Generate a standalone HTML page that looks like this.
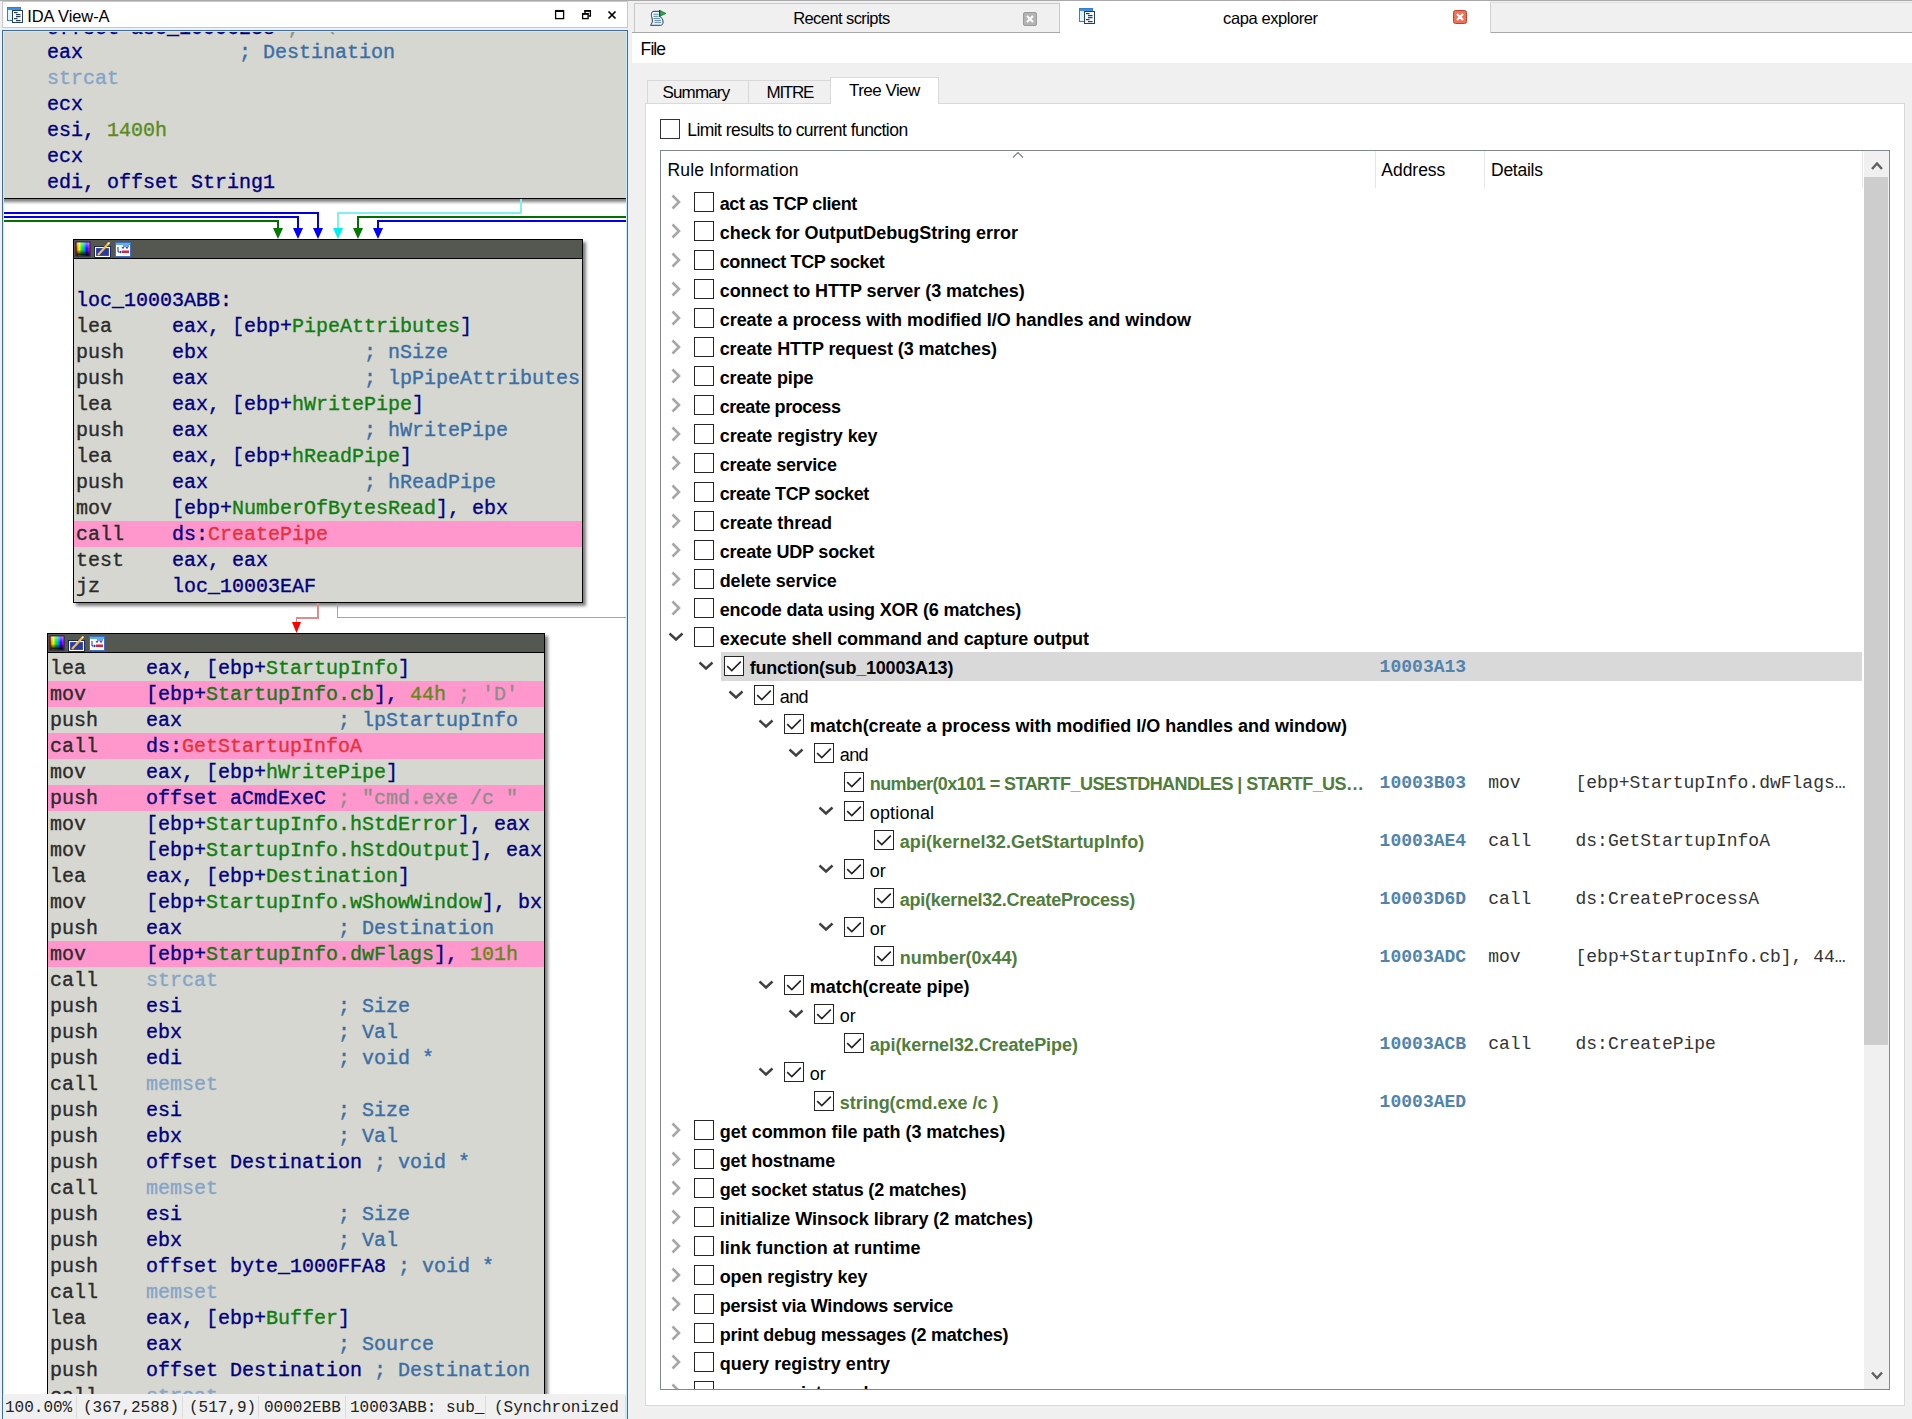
<!DOCTYPE html><html><head><meta charset="utf-8"><style>*{margin:0;padding:0;box-sizing:border-box}
html,body{width:1912px;height:1419px;overflow:hidden;background:#f0f0f0;position:relative;font-family:"Liberation Sans",sans-serif}
.abs{position:absolute}
.ttl{font-size:17px;color:#000;letter-spacing:-0.4px;white-space:pre;line-height:20px}
.blk{position:absolute;background:#d5d7d0;border:1px solid #000;box-shadow:3px 3px 3px rgba(0,0,0,0.5)}
.hdr{position:absolute;left:0;top:0;right:0;height:19px;background:#555751;border-bottom:1px solid #000}
.ln{position:absolute;height:26px;font-family:"Liberation Mono",monospace;font-size:20px;line-height:26px;white-space:pre;color:#2b2b2b;padding-top:1px;-webkit-text-stroke:0.35px currentColor}
.pk{background:#ff97cc}
.r{color:#000080}
.g{color:#0f7d0f}
.cm{color:#3a6ea5}
.lb{color:#85a4c8}
.rd{color:#e8303a}
.nm{color:#5f8a1a}
.gr{color:#8d8d8d}
.stt{font-family:"Liberation Mono",monospace;font-size:16px;line-height:22px;white-space:pre;color:#222}
.cb{position:absolute;width:20px;height:20px;border:1px solid #333;background:#fff}
.row{position:absolute;font-size:18px;line-height:29px;white-space:pre;color:#000}
.b{font-weight:bold}
.gt{color:#4f7f3f}
.addr{position:absolute;font-family:"Liberation Mono",monospace;font-weight:bold;font-size:18px;color:#4a78a0;white-space:pre;line-height:29px}
.det{position:absolute;font-family:"Liberation Mono",monospace;font-size:18px;color:#1a1a1a;white-space:pre;line-height:29px}
.ui{position:absolute;font-size:17px;color:#000;white-space:pre;line-height:20px}
</style></head><body><div class="abs" style="left:0;top:0;width:1912px;height:1px;background:#a9a9a9"></div>
<div class="abs" style="left:2px;top:1px;width:626px;height:27px;background:#fff;border:1px solid #c8c8c8"></div>
<svg class="abs" style="left:7px;top:7px" width="17" height="17" viewBox="0 0 17 17">
 <rect x="0.5" y="0.5" width="13" height="13" fill="#dff6ff" stroke="#3b7cc4"/>
 <rect x="1" y="1" width="12" height="2" fill="#3d8fe0"/>
 <rect x="5.5" y="3.5" width="10" height="12" fill="#f8fcff" stroke="#253f63"/>
 <rect x="7" y="5" width="3.5" height="1.2" fill="#2d3d55"/><rect x="9" y="7" width="4.5" height="1.2" fill="#2d3d55"/><rect x="9" y="9" width="4.5" height="1.2" fill="#2d3d55"/><rect x="7" y="11" width="3.5" height="1.2" fill="#2d3d55"/><rect x="9" y="13" width="4.5" height="1.2" fill="#2d3d55"/>
</svg>

<svg class="abs" style="left:550px;top:6px" width="72" height="16" viewBox="0 0 72 16">
 <rect x="5.6" y="4.6" width="8" height="8" fill="none" stroke="#000" stroke-width="1.3"/>
 <rect x="5" y="4" width="9" height="2" fill="#000"/>
 <rect x="32.6" y="7.6" width="5.5" height="5" fill="none" stroke="#000" stroke-width="1.3"/>
 <rect x="32" y="7" width="6.5" height="1.8" fill="#000"/>
 <path d="M35 7V4.6h5.4V10H38.5" fill="none" stroke="#000" stroke-width="1.3"/>
 <rect x="34.4" y="4" width="6.6" height="1.8" fill="#000"/>
 <path d="M58.5 5.5l7 7M65.5 5.5l-7 7" stroke="#000" stroke-width="1.7"/>
</svg>
<div class="abs" style="left:2px;top:30px;width:626px;height:1400px;background:#fff;border:1px solid #3d6d9c;overflow:hidden"><div class="abs" style="left:-3px;top:-31px;width:1912px;height:1419px"><div class="blk" style="left:-20px;top:-20px;width:700px;height:219px"><div class="ln" style="top:34px;left:66px;width:700px;"><span class="r">offset asc_1000C238 </span><span class="gr">; '\'</span></div><div class="ln" style="top:58px;left:66px;width:700px;"><span class="r">eax             </span><span class="cm">; Destination</span></div><div class="ln" style="top:84px;left:66px;width:700px;"><span class="lb">strcat</span></div><div class="ln" style="top:110px;left:66px;width:700px;"><span class="r">ecx</span></div><div class="ln" style="top:136px;left:66px;width:700px;"><span class="r">esi, </span><span class="nm">1400h</span></div><div class="ln" style="top:162px;left:66px;width:700px;"><span class="r">ecx</span></div><div class="ln" style="top:188px;left:66px;width:700px;"><span class="r">edi, offset String1</span></div></div><div class="blk" style="left:73px;top:239px;width:510px;height:364px"><div class="hdr"></div><svg class="abs" style="left:1px;top:1px" width="58" height="17" viewBox="0 0 58 17">
 <defs><linearGradient id="hue" x1="0" x2="1" y1="0" y2="0">
  <stop offset="0" stop-color="#ff4000"/><stop offset="0.2" stop-color="#ffff00"/><stop offset="0.4" stop-color="#00ff00"/><stop offset="0.6" stop-color="#00a0ff"/><stop offset="0.8" stop-color="#2000ff"/><stop offset="1" stop-color="#ff00ff"/></linearGradient>
  <linearGradient id="dk" x1="0" x2="0" y1="0" y2="1"><stop offset="0" stop-color="#fff" stop-opacity="0.5"/><stop offset="0.45" stop-color="#fff" stop-opacity="0"/><stop offset="0.55" stop-color="#000" stop-opacity="0"/><stop offset="1" stop-color="#000" stop-opacity="1"/></linearGradient></defs>
 <rect x="0.5" y="0.5" width="15" height="15" fill="#1a1a3a"/>
 <rect x="1.5" y="1.5" width="13" height="13" fill="url(#hue)"/>
 <rect x="1.5" y="1.5" width="13" height="13" fill="url(#dk)"/>
 <rect x="20.5" y="6.5" width="14" height="9" fill="#2a3aa0" stroke="#fff" stroke-width="1.2"/>
 <rect x="19.5" y="5.5" width="16" height="11" fill="none" stroke="#0a1a60" stroke-width="0.8"/>
 <path d="M23 14L34 2" stroke="#f0c040" stroke-width="2.2"/><path d="M33 3l1.5-1.5" stroke="#fff" stroke-width="1.5"/>
 <rect x="40" y="1" width="16" height="15" fill="#3c70c0"/>
 <rect x="41" y="4" width="14" height="11" fill="#fff"/>
 <rect x="41" y="2" width="14" height="2" fill="#5ab0f0"/>
 <path d="M43 6v5h3M45 10l1.5 1-1.5 1M47 6l1 1.5 1-1.5M51 6l1 1.5 1-1.5M48 5h6" stroke="#1030c0" stroke-width="1" fill="none"/>
 <rect x="47" y="9.5" width="7" height="2.5" fill="#e02040"/>
</svg><div class="ln" style="top:21px;left:0px;width:508px;padding-left:2px;"></div><div class="ln" style="top:47px;left:0px;width:508px;padding-left:2px;"><span class="r">loc_10003ABB:</span></div><div class="ln" style="top:73px;left:0px;width:508px;padding-left:2px;">lea     <span class="r">eax, [ebp+</span><span class="g">PipeAttributes</span><span class="r">]</span></div><div class="ln" style="top:99px;left:0px;width:508px;padding-left:2px;">push    <span class="r">ebx             </span><span class="cm">; nSize</span></div><div class="ln" style="top:125px;left:0px;width:508px;padding-left:2px;">push    <span class="r">eax             </span><span class="cm">; lpPipeAttributes</span></div><div class="ln" style="top:151px;left:0px;width:508px;padding-left:2px;">lea     <span class="r">eax, [ebp+</span><span class="g">hWritePipe</span><span class="r">]</span></div><div class="ln" style="top:177px;left:0px;width:508px;padding-left:2px;">push    <span class="r">eax             </span><span class="cm">; hWritePipe</span></div><div class="ln" style="top:203px;left:0px;width:508px;padding-left:2px;">lea     <span class="r">eax, [ebp+</span><span class="g">hReadPipe</span><span class="r">]</span></div><div class="ln" style="top:229px;left:0px;width:508px;padding-left:2px;">push    <span class="r">eax             </span><span class="cm">; hReadPipe</span></div><div class="ln" style="top:255px;left:0px;width:508px;padding-left:2px;">mov     <span class="r">[ebp+</span><span class="g">NumberOfBytesRead</span><span class="r">], ebx</span></div><div class="ln pk" style="top:281px;left:0px;width:508px;padding-left:2px;">call    <span class="r">ds:</span><span class="rd">CreatePipe</span></div><div class="ln" style="top:307px;left:0px;width:508px;padding-left:2px;">test    <span class="r">eax, eax</span></div><div class="ln" style="top:333px;left:0px;width:508px;padding-left:2px;">jz      <span class="r">loc_10003EAF</span></div></div><div class="blk" style="left:47px;top:633px;width:498px;height:820px"><div class="hdr"></div><svg class="abs" style="left:1px;top:1px" width="58" height="17" viewBox="0 0 58 17">
 <defs><linearGradient id="hue" x1="0" x2="1" y1="0" y2="0">
  <stop offset="0" stop-color="#ff4000"/><stop offset="0.2" stop-color="#ffff00"/><stop offset="0.4" stop-color="#00ff00"/><stop offset="0.6" stop-color="#00a0ff"/><stop offset="0.8" stop-color="#2000ff"/><stop offset="1" stop-color="#ff00ff"/></linearGradient>
  <linearGradient id="dk" x1="0" x2="0" y1="0" y2="1"><stop offset="0" stop-color="#fff" stop-opacity="0.5"/><stop offset="0.45" stop-color="#fff" stop-opacity="0"/><stop offset="0.55" stop-color="#000" stop-opacity="0"/><stop offset="1" stop-color="#000" stop-opacity="1"/></linearGradient></defs>
 <rect x="0.5" y="0.5" width="15" height="15" fill="#1a1a3a"/>
 <rect x="1.5" y="1.5" width="13" height="13" fill="url(#hue)"/>
 <rect x="1.5" y="1.5" width="13" height="13" fill="url(#dk)"/>
 <rect x="20.5" y="6.5" width="14" height="9" fill="#2a3aa0" stroke="#fff" stroke-width="1.2"/>
 <rect x="19.5" y="5.5" width="16" height="11" fill="none" stroke="#0a1a60" stroke-width="0.8"/>
 <path d="M23 14L34 2" stroke="#f0c040" stroke-width="2.2"/><path d="M33 3l1.5-1.5" stroke="#fff" stroke-width="1.5"/>
 <rect x="40" y="1" width="16" height="15" fill="#3c70c0"/>
 <rect x="41" y="4" width="14" height="11" fill="#fff"/>
 <rect x="41" y="2" width="14" height="2" fill="#5ab0f0"/>
 <path d="M43 6v5h3M45 10l1.5 1-1.5 1M47 6l1 1.5 1-1.5M51 6l1 1.5 1-1.5M48 5h6" stroke="#1030c0" stroke-width="1" fill="none"/>
 <rect x="47" y="9.5" width="7" height="2.5" fill="#e02040"/>
</svg><div class="ln" style="top:21px;left:0px;width:496px;padding-left:2px;">lea     <span class="r">eax, [ebp+</span><span class="g">StartupInfo</span><span class="r">]</span></div><div class="ln pk" style="top:47px;left:0px;width:496px;padding-left:2px;">mov     <span class="r">[ebp+</span><span class="g">StartupInfo.cb</span><span class="r">], </span><span class="nm">44h</span><span class="gr"> ; 'D'</span></div><div class="ln" style="top:73px;left:0px;width:496px;padding-left:2px;">push    <span class="r">eax             </span><span class="cm">; lpStartupInfo</span></div><div class="ln pk" style="top:99px;left:0px;width:496px;padding-left:2px;">call    <span class="r">ds:</span><span class="rd">GetStartupInfoA</span></div><div class="ln" style="top:125px;left:0px;width:496px;padding-left:2px;">mov     <span class="r">eax, [ebp+</span><span class="g">hWritePipe</span><span class="r">]</span></div><div class="ln pk" style="top:151px;left:0px;width:496px;padding-left:2px;">push    <span class="r">offset aCmdExeC </span><span class="gr">; "cmd.exe /c "</span></div><div class="ln" style="top:177px;left:0px;width:496px;padding-left:2px;">mov     <span class="r">[ebp+</span><span class="g">StartupInfo.hStdError</span><span class="r">], eax</span></div><div class="ln" style="top:203px;left:0px;width:496px;padding-left:2px;">mov     <span class="r">[ebp+</span><span class="g">StartupInfo.hStdOutput</span><span class="r">], eax</span></div><div class="ln" style="top:229px;left:0px;width:496px;padding-left:2px;">lea     <span class="r">eax, [ebp+</span><span class="g">Destination</span><span class="r">]</span></div><div class="ln" style="top:255px;left:0px;width:496px;padding-left:2px;">mov     <span class="r">[ebp+</span><span class="g">StartupInfo.wShowWindow</span><span class="r">], bx</span></div><div class="ln" style="top:281px;left:0px;width:496px;padding-left:2px;">push    <span class="r">eax             </span><span class="cm">; Destination</span></div><div class="ln pk" style="top:307px;left:0px;width:496px;padding-left:2px;">mov     <span class="r">[ebp+</span><span class="g">StartupInfo.dwFlags</span><span class="r">], </span><span class="nm">101h</span></div><div class="ln" style="top:333px;left:0px;width:496px;padding-left:2px;">call    <span class="lb">strcat</span></div><div class="ln" style="top:359px;left:0px;width:496px;padding-left:2px;">push    <span class="r">esi             </span><span class="cm">; Size</span></div><div class="ln" style="top:385px;left:0px;width:496px;padding-left:2px;">push    <span class="r">ebx             </span><span class="cm">; Val</span></div><div class="ln" style="top:411px;left:0px;width:496px;padding-left:2px;">push    <span class="r">edi             </span><span class="cm">; void *</span></div><div class="ln" style="top:437px;left:0px;width:496px;padding-left:2px;">call    <span class="lb">memset</span></div><div class="ln" style="top:463px;left:0px;width:496px;padding-left:2px;">push    <span class="r">esi             </span><span class="cm">; Size</span></div><div class="ln" style="top:489px;left:0px;width:496px;padding-left:2px;">push    <span class="r">ebx             </span><span class="cm">; Val</span></div><div class="ln" style="top:515px;left:0px;width:496px;padding-left:2px;">push    <span class="r">offset Destination </span><span class="cm">; void *</span></div><div class="ln" style="top:541px;left:0px;width:496px;padding-left:2px;">call    <span class="lb">memset</span></div><div class="ln" style="top:567px;left:0px;width:496px;padding-left:2px;">push    <span class="r">esi             </span><span class="cm">; Size</span></div><div class="ln" style="top:593px;left:0px;width:496px;padding-left:2px;">push    <span class="r">ebx             </span><span class="cm">; Val</span></div><div class="ln" style="top:619px;left:0px;width:496px;padding-left:2px;">push    <span class="r">offset byte_1000FFA8 </span><span class="cm">; void *</span></div><div class="ln" style="top:645px;left:0px;width:496px;padding-left:2px;">call    <span class="lb">memset</span></div><div class="ln" style="top:671px;left:0px;width:496px;padding-left:2px;">lea     <span class="r">eax, [ebp+</span><span class="g">Buffer</span><span class="r">]</span></div><div class="ln" style="top:697px;left:0px;width:496px;padding-left:2px;">push    <span class="r">eax             </span><span class="cm">; Source</span></div><div class="ln" style="top:723px;left:0px;width:496px;padding-left:2px;">push    <span class="r">offset Destination </span><span class="cm">; Destination</span></div><div class="ln" style="top:749px;left:0px;width:496px;padding-left:2px;">call    <span class="lb">strcat</span></div></div><div class="abs" style="left:0px;top:212px;width:319px;height:2px;background:#0000e0"></div><div class="abs" style="left:317px;top:212px;width:2px;height:18px;background:#0000e0"></div><svg class="abs" style="left:313.0px;top:228px" width="10" height="11" viewBox="0 0 10 11"><path d="M0 0H10L5.0 11Z" fill="#0000ff"/></svg><div class="abs" style="left:0px;top:216px;width:299px;height:2px;background:#0000e0"></div><div class="abs" style="left:297px;top:216px;width:2px;height:14px;background:#0000e0"></div><svg class="abs" style="left:293.0px;top:228px" width="10" height="11" viewBox="0 0 10 11"><path d="M0 0H10L5.0 11Z" fill="#0000ff"/></svg><div class="abs" style="left:0px;top:220px;width:279px;height:2px;background:#007000"></div><div class="abs" style="left:277px;top:220px;width:2px;height:10px;background:#007000"></div><svg class="abs" style="left:273.0px;top:228px" width="10" height="11" viewBox="0 0 10 11"><path d="M0 0H10L5.0 11Z" fill="#007a00"/></svg><div class="abs" style="left:520px;top:199px;width:2px;height:15px;background:#80f0f0"></div><div class="abs" style="left:337px;top:212px;width:185px;height:2px;background:#80f0f0"></div><div class="abs" style="left:337px;top:212px;width:2px;height:18px;background:#80f0f0"></div><svg class="abs" style="left:333.0px;top:228px" width="10" height="11" viewBox="0 0 10 11"><path d="M0 0H10L5.0 11Z" fill="#00f0f0"/></svg><div class="abs" style="left:357px;top:216px;width:285px;height:2px;background:#007000"></div><div class="abs" style="left:357px;top:216px;width:2px;height:14px;background:#007000"></div><svg class="abs" style="left:353.0px;top:228px" width="10" height="11" viewBox="0 0 10 11"><path d="M0 0H10L5.0 11Z" fill="#007a00"/></svg><div class="abs" style="left:377px;top:220px;width:265px;height:2px;background:#0000e0"></div><div class="abs" style="left:377px;top:220px;width:2px;height:10px;background:#0000e0"></div><svg class="abs" style="left:373.0px;top:228px" width="10" height="11" viewBox="0 0 10 11"><path d="M0 0H10L5.0 11Z" fill="#0000ff"/></svg><div class="abs" style="left:317px;top:603px;width:1.5px;height:15.5px;background:#e08a8a"></div><div class="abs" style="left:296px;top:617px;width:22.5px;height:1.5px;background:#e08a8a"></div><div class="abs" style="left:295.5px;top:617px;width:1.5px;height:7.5px;background:#e08a8a"></div><svg class="abs" style="left:291.5px;top:622px" width="9" height="11" viewBox="0 0 9 11"><path d="M0 0H9L4.5 11Z" fill="#ff0000"/></svg><div class="abs" style="left:337px;top:603px;width:1.4px;height:15.4px;background:#88b888"></div><div class="abs" style="left:337px;top:617px;width:304.4px;height:1.4px;background:#88b888"></div></div><div class="abs" style="left:0;top:0;right:0;bottom:0;border:1px solid #c4ecfc"></div></div>
<div class="abs" style="left:3px;top:1394px;width:623px;height:25px;background:#f0f0f0"></div>
<div class="abs stt" style="left:5px;top:1397px">100.00%</div>
<div class="abs stt" style="left:83px;top:1397px">(367,2588)</div>
<div class="abs stt" style="left:189px;top:1397px">(517,9)</div>
<div class="abs stt" style="left:264px;top:1397px">00002EBB</div>
<div class="abs stt" style="left:350px;top:1397px">10003ABB: sub_</div>
<div class="abs stt" style="left:494px;top:1397px">(Synchronized</div>
<div class="abs" style="left:76px;top:1396px;width:1px;height:22px;background:#dcdcdc"></div>
<div class="abs" style="left:182px;top:1396px;width:1px;height:22px;background:#dcdcdc"></div>
<div class="abs" style="left:258px;top:1396px;width:1px;height:22px;background:#dcdcdc"></div>
<div class="abs" style="left:345px;top:1396px;width:1px;height:22px;background:#dcdcdc"></div>
<div class="abs" style="left:485px;top:1396px;width:1px;height:22px;background:#dcdcdc"></div>
<div class="abs" style="left:625px;top:1396px;width:1px;height:22px;background:#dcdcdc"></div><div class="abs" style="left:632px;top:1px;width:1280px;height:32px;background:#f0f0f0"></div>
<div class="abs" style="left:632px;top:32px;width:1280px;height:1px;background:#b9b9b9"></div>
<div class="abs" style="left:634px;top:3px;width:426px;height:30px;background:#f0f0f0;border:1px solid #c9c9c9;border-bottom:none"></div>
<div class="abs" style="left:632px;top:32px;width:428px;height:1px;background:#a8a8a8"></div>
<div class="abs" style="left:1060px;top:1px;width:431px;height:33px;background:#fff"></div>
<div class="abs" style="left:1490px;top:2px;width:422px;height:31px;background:#f0f0f0;border-left:1px solid #d0d0d0;border-top:1px solid #e0e0e0"></div>
<div class="abs" style="left:1491px;top:32px;width:421px;height:1px;background:#a8a8a8"></div>
<svg class="abs" style="left:648px;top:8px" width="20" height="20" viewBox="0 0 20 20">
 <path d="M5 3.3H11.5V8C13 9 16 12 14.8 15.5C14.3 16.8 13.8 17.3 12.5 17.3H2.5C3.5 16 5 14 4.2 11C3.4 8 2.6 5 5 3.3Z" fill="#e4f4ff" stroke="#2a3a50" stroke-width="1"/>
 <path d="M5.5 6.3h5M5.5 8.4h5M5.5 10.5h6.5M6.5 12.5h6.5M6.5 14.4h6.5" stroke="#6a90c0" stroke-width="1"/>
 <path d="M11.7 2V8.8" stroke="#0a5010" stroke-width="1.4"/>
 <path d="M12.2 2.6L18 5.4L12.2 8.2Z" fill="#2ea84a" stroke="#0a6018" stroke-width="0.6"/>
</svg>
<svg class="abs" style="left:1079px;top:8px" width="17" height="17" viewBox="0 0 17 17">
 <rect x="0.5" y="0.5" width="13" height="13" fill="#dff6ff" stroke="#3b7cc4"/>
 <rect x="1" y="1" width="12" height="2" fill="#3d8fe0"/>
 <rect x="5.5" y="3.5" width="10" height="12" fill="#f8fcff" stroke="#253f63"/>
 <rect x="7" y="5" width="3.5" height="1.2" fill="#2d3d55"/><rect x="9" y="7" width="4.5" height="1.2" fill="#2d3d55"/><rect x="9" y="9" width="4.5" height="1.2" fill="#2d3d55"/><rect x="7" y="11" width="3.5" height="1.2" fill="#2d3d55"/><rect x="9" y="13" width="4.5" height="1.2" fill="#2d3d55"/>
</svg>
<svg class="abs" style="left:1022px;top:11px" width="16" height="16" viewBox="0 0 16 16">
 <rect x="1.5" y="1.5" width="13" height="13" rx="1.5" fill="#b4b4b4" stroke="#9a9a9a"/>
 <path d="M5 5l6 6M11 5l-6 6" stroke="#fff" stroke-width="2"/>
</svg>
<svg class="abs" style="left:1452px;top:9px" width="16" height="16" viewBox="0 0 16 16">
 <rect x="1.5" y="1.5" width="13" height="13" rx="2" fill="#ec7358" stroke="#c2402c"/>
 <path d="M5 5l6 6M11 5l-6 6" stroke="#fff" stroke-width="2.2"/>
</svg>
<div class="abs" style="left:632px;top:33px;width:1280px;height:30px;background:#fff"></div>
<div class="abs" style="left:647px;top:80px;width:102px;height:24px;background:#f0f0f0;border:1px solid #d9d9d9;border-bottom:none"></div>
<div class="abs" style="left:748px;top:80px;width:83px;height:24px;background:#f0f0f0;border:1px solid #d9d9d9;border-bottom:none"></div>
<div class="abs" style="left:645px;top:103px;width:1260px;height:1303px;background:#fff;border:1px solid #d9d9d9"></div>
<div class="abs" style="left:830px;top:77px;width:109px;height:27px;background:#fff;border:1px solid #d9d9d9;border-bottom:none"></div>
<div class="abs" style="left:660px;top:119px;width:20px;height:20px;background:#fff;border:1px solid #333"></div>
<div class="abs" style="left:660px;top:150px;width:1230px;height:1240px;background:#fff;border:1px solid #828790"></div>
<div class="abs" style="left:1375px;top:151px;width:1px;height:37px;background:#e5e5e5"></div>
<div class="abs" style="left:1484px;top:151px;width:1px;height:37px;background:#e5e5e5"></div>
<div class="abs" style="left:1862px;top:151px;width:1px;height:37px;background:#e5e5e5"></div>
<svg class="abs" style="left:1011px;top:150px" width="14" height="10" viewBox="0 0 14 10"><path d="M2 7.5L7 2.5L12 7.5" fill="none" stroke="#7a7a7a" stroke-width="1.1"/></svg>
<div class="abs" style="left:1864px;top:151px;width:25px;height:1238px;background:#f0f0f0"></div>
<div class="abs" style="left:1864px;top:177px;width:24px;height:868px;background:#cdcdcd"></div>
<svg class="abs" style="left:1868px;top:158px" width="18" height="14" viewBox="0 0 18 14"><path d="M4 11L9 5.5L14 11" fill="none" stroke="#606060" stroke-width="2.4"/></svg>
<svg class="abs" style="left:1868px;top:1369px" width="18" height="14" viewBox="0 0 18 14"><path d="M4 3.5L9 9L14 3.5" fill="none" stroke="#606060" stroke-width="2.4"/></svg>
<div class="abs" style="left:27.2px;top:5.8px;font-family:'Liberation Sans';font-size:16.5px;font-weight:normal;color:#000;letter-spacing:-0.086px;line-height:21px;white-space:pre;">IDA View-A</div>
<div class="abs" style="left:793.2px;top:8.4px;font-family:'Liberation Sans';font-size:16.5px;font-weight:normal;color:#000;letter-spacing:-0.582px;line-height:21px;white-space:pre;">Recent scripts</div>
<div class="abs" style="left:1223.1px;top:8.4px;font-family:'Liberation Sans';font-size:16.5px;font-weight:normal;color:#000;letter-spacing:-0.414px;line-height:21px;white-space:pre;">capa explorer</div>
<div class="abs" style="left:640.6px;top:38.2px;font-family:'Liberation Sans';font-size:17.5px;font-weight:normal;color:#000;letter-spacing:-0.901px;line-height:23px;white-space:pre;">File</div>
<div class="abs" style="left:662.4px;top:81.9px;font-family:'Liberation Sans';font-size:17px;font-weight:normal;color:#000;letter-spacing:-0.819px;line-height:22px;white-space:pre;">Summary</div>
<div class="abs" style="left:766.5px;top:81.9px;font-family:'Liberation Sans';font-size:17px;font-weight:normal;color:#000;letter-spacing:-1.278px;line-height:22px;white-space:pre;">MITRE</div>
<div class="abs" style="left:849.0px;top:79.5px;font-family:'Liberation Sans';font-size:17px;font-weight:normal;color:#000;letter-spacing:-0.533px;line-height:22px;white-space:pre;">Tree View</div>
<div class="abs" style="left:687.2px;top:118.5px;font-family:'Liberation Sans';font-size:17.5px;font-weight:normal;color:#000;letter-spacing:-0.542px;line-height:23px;white-space:pre;">Limit results to current function</div>
<div class="abs" style="left:667.4px;top:159.2px;font-family:'Liberation Sans';font-size:17.5px;font-weight:normal;color:#000;letter-spacing:0.187px;line-height:23px;white-space:pre;">Rule Information</div>
<div class="abs" style="left:1381.3px;top:159.2px;font-family:'Liberation Sans';font-size:17.5px;font-weight:normal;color:#000;letter-spacing:-0.029px;line-height:23px;white-space:pre;">Address</div>
<div class="abs" style="left:1491.0px;top:159.2px;font-family:'Liberation Sans';font-size:17.5px;font-weight:normal;color:#000;letter-spacing:-0.257px;line-height:23px;white-space:pre;">Details</div>
<div class="abs" style="left:661px;top:151px;width:1203px;height:1238px;overflow:hidden">
<svg class="abs" style="left:7px;top:42px" width="16" height="18" viewBox="0 0 16 18"><path d="M4.5 2.5L11 9L4.5 15.5" fill="none" stroke="#a6a6a6" stroke-width="2.6"/></svg>
<div class="abs" style="left:33px;top:41px;width:20px;height:20px;background:#fff;border:1px solid #262626"></div>
<svg class="abs" style="left:7px;top:71px" width="16" height="18" viewBox="0 0 16 18"><path d="M4.5 2.5L11 9L4.5 15.5" fill="none" stroke="#a6a6a6" stroke-width="2.6"/></svg>
<div class="abs" style="left:33px;top:70px;width:20px;height:20px;background:#fff;border:1px solid #262626"></div>
<svg class="abs" style="left:7px;top:100px" width="16" height="18" viewBox="0 0 16 18"><path d="M4.5 2.5L11 9L4.5 15.5" fill="none" stroke="#a6a6a6" stroke-width="2.6"/></svg>
<div class="abs" style="left:33px;top:99px;width:20px;height:20px;background:#fff;border:1px solid #262626"></div>
<svg class="abs" style="left:7px;top:129px" width="16" height="18" viewBox="0 0 16 18"><path d="M4.5 2.5L11 9L4.5 15.5" fill="none" stroke="#a6a6a6" stroke-width="2.6"/></svg>
<div class="abs" style="left:33px;top:128px;width:20px;height:20px;background:#fff;border:1px solid #262626"></div>
<svg class="abs" style="left:7px;top:158px" width="16" height="18" viewBox="0 0 16 18"><path d="M4.5 2.5L11 9L4.5 15.5" fill="none" stroke="#a6a6a6" stroke-width="2.6"/></svg>
<div class="abs" style="left:33px;top:157px;width:20px;height:20px;background:#fff;border:1px solid #262626"></div>
<svg class="abs" style="left:7px;top:187px" width="16" height="18" viewBox="0 0 16 18"><path d="M4.5 2.5L11 9L4.5 15.5" fill="none" stroke="#a6a6a6" stroke-width="2.6"/></svg>
<div class="abs" style="left:33px;top:186px;width:20px;height:20px;background:#fff;border:1px solid #262626"></div>
<svg class="abs" style="left:7px;top:216px" width="16" height="18" viewBox="0 0 16 18"><path d="M4.5 2.5L11 9L4.5 15.5" fill="none" stroke="#a6a6a6" stroke-width="2.6"/></svg>
<div class="abs" style="left:33px;top:215px;width:20px;height:20px;background:#fff;border:1px solid #262626"></div>
<svg class="abs" style="left:7px;top:245px" width="16" height="18" viewBox="0 0 16 18"><path d="M4.5 2.5L11 9L4.5 15.5" fill="none" stroke="#a6a6a6" stroke-width="2.6"/></svg>
<div class="abs" style="left:33px;top:244px;width:20px;height:20px;background:#fff;border:1px solid #262626"></div>
<svg class="abs" style="left:7px;top:274px" width="16" height="18" viewBox="0 0 16 18"><path d="M4.5 2.5L11 9L4.5 15.5" fill="none" stroke="#a6a6a6" stroke-width="2.6"/></svg>
<div class="abs" style="left:33px;top:273px;width:20px;height:20px;background:#fff;border:1px solid #262626"></div>
<svg class="abs" style="left:7px;top:303px" width="16" height="18" viewBox="0 0 16 18"><path d="M4.5 2.5L11 9L4.5 15.5" fill="none" stroke="#a6a6a6" stroke-width="2.6"/></svg>
<div class="abs" style="left:33px;top:302px;width:20px;height:20px;background:#fff;border:1px solid #262626"></div>
<svg class="abs" style="left:7px;top:332px" width="16" height="18" viewBox="0 0 16 18"><path d="M4.5 2.5L11 9L4.5 15.5" fill="none" stroke="#a6a6a6" stroke-width="2.6"/></svg>
<div class="abs" style="left:33px;top:331px;width:20px;height:20px;background:#fff;border:1px solid #262626"></div>
<svg class="abs" style="left:7px;top:361px" width="16" height="18" viewBox="0 0 16 18"><path d="M4.5 2.5L11 9L4.5 15.5" fill="none" stroke="#a6a6a6" stroke-width="2.6"/></svg>
<div class="abs" style="left:33px;top:360px;width:20px;height:20px;background:#fff;border:1px solid #262626"></div>
<svg class="abs" style="left:7px;top:390px" width="16" height="18" viewBox="0 0 16 18"><path d="M4.5 2.5L11 9L4.5 15.5" fill="none" stroke="#a6a6a6" stroke-width="2.6"/></svg>
<div class="abs" style="left:33px;top:389px;width:20px;height:20px;background:#fff;border:1px solid #262626"></div>
<svg class="abs" style="left:7px;top:419px" width="16" height="18" viewBox="0 0 16 18"><path d="M4.5 2.5L11 9L4.5 15.5" fill="none" stroke="#a6a6a6" stroke-width="2.6"/></svg>
<div class="abs" style="left:33px;top:418px;width:20px;height:20px;background:#fff;border:1px solid #262626"></div>
<svg class="abs" style="left:7px;top:448px" width="16" height="18" viewBox="0 0 16 18"><path d="M4.5 2.5L11 9L4.5 15.5" fill="none" stroke="#a6a6a6" stroke-width="2.6"/></svg>
<div class="abs" style="left:33px;top:447px;width:20px;height:20px;background:#fff;border:1px solid #262626"></div>
<svg class="abs" style="left:7px;top:478px" width="16" height="16" viewBox="0 0 16 16"><path d="M1.5 4.5L8 10.5L14.5 4.5" fill="none" stroke="#404040" stroke-width="2.4"/></svg>
<div class="abs" style="left:33px;top:476px;width:20px;height:20px;background:#fff;border:1px solid #262626"></div>
<div class="abs" style="left:60px;top:501px;width:1141px;height:29px;background:#d9d9d9"></div>
<svg class="abs" style="left:37px;top:507px" width="16" height="16" viewBox="0 0 16 16"><path d="M1.5 4.5L8 10.5L14.5 4.5" fill="none" stroke="#404040" stroke-width="2.4"/></svg>
<div class="abs" style="left:63px;top:505px;width:20px;height:20px;background:#fff;border:1px solid #262626"></div>
<svg class="abs" style="left:63px;top:505px" width="20" height="20" viewBox="0 0 20 20"><path d="M3.2 10.2L7.8 14.6L16.8 5.6" fill="none" stroke="#222" stroke-width="1.6"/></svg>
<svg class="abs" style="left:67px;top:536px" width="16" height="16" viewBox="0 0 16 16"><path d="M1.5 4.5L8 10.5L14.5 4.5" fill="none" stroke="#404040" stroke-width="2.4"/></svg>
<div class="abs" style="left:93px;top:534px;width:20px;height:20px;background:#fff;border:1px solid #262626"></div>
<svg class="abs" style="left:93px;top:534px" width="20" height="20" viewBox="0 0 20 20"><path d="M3.2 10.2L7.8 14.6L16.8 5.6" fill="none" stroke="#222" stroke-width="1.6"/></svg>
<svg class="abs" style="left:97px;top:565px" width="16" height="16" viewBox="0 0 16 16"><path d="M1.5 4.5L8 10.5L14.5 4.5" fill="none" stroke="#404040" stroke-width="2.4"/></svg>
<div class="abs" style="left:123px;top:563px;width:20px;height:20px;background:#fff;border:1px solid #262626"></div>
<svg class="abs" style="left:123px;top:563px" width="20" height="20" viewBox="0 0 20 20"><path d="M3.2 10.2L7.8 14.6L16.8 5.6" fill="none" stroke="#222" stroke-width="1.6"/></svg>
<svg class="abs" style="left:127px;top:594px" width="16" height="16" viewBox="0 0 16 16"><path d="M1.5 4.5L8 10.5L14.5 4.5" fill="none" stroke="#404040" stroke-width="2.4"/></svg>
<div class="abs" style="left:153px;top:592px;width:20px;height:20px;background:#fff;border:1px solid #262626"></div>
<svg class="abs" style="left:153px;top:592px" width="20" height="20" viewBox="0 0 20 20"><path d="M3.2 10.2L7.8 14.6L16.8 5.6" fill="none" stroke="#222" stroke-width="1.6"/></svg>
<div class="abs" style="left:183px;top:621px;width:20px;height:20px;background:#fff;border:1px solid #262626"></div>
<svg class="abs" style="left:183px;top:621px" width="20" height="20" viewBox="0 0 20 20"><path d="M3.2 10.2L7.8 14.6L16.8 5.6" fill="none" stroke="#222" stroke-width="1.6"/></svg>
<svg class="abs" style="left:157px;top:652px" width="16" height="16" viewBox="0 0 16 16"><path d="M1.5 4.5L8 10.5L14.5 4.5" fill="none" stroke="#404040" stroke-width="2.4"/></svg>
<div class="abs" style="left:183px;top:650px;width:20px;height:20px;background:#fff;border:1px solid #262626"></div>
<svg class="abs" style="left:183px;top:650px" width="20" height="20" viewBox="0 0 20 20"><path d="M3.2 10.2L7.8 14.6L16.8 5.6" fill="none" stroke="#222" stroke-width="1.6"/></svg>
<div class="abs" style="left:213px;top:679px;width:20px;height:20px;background:#fff;border:1px solid #262626"></div>
<svg class="abs" style="left:213px;top:679px" width="20" height="20" viewBox="0 0 20 20"><path d="M3.2 10.2L7.8 14.6L16.8 5.6" fill="none" stroke="#222" stroke-width="1.6"/></svg>
<svg class="abs" style="left:157px;top:710px" width="16" height="16" viewBox="0 0 16 16"><path d="M1.5 4.5L8 10.5L14.5 4.5" fill="none" stroke="#404040" stroke-width="2.4"/></svg>
<div class="abs" style="left:183px;top:708px;width:20px;height:20px;background:#fff;border:1px solid #262626"></div>
<svg class="abs" style="left:183px;top:708px" width="20" height="20" viewBox="0 0 20 20"><path d="M3.2 10.2L7.8 14.6L16.8 5.6" fill="none" stroke="#222" stroke-width="1.6"/></svg>
<div class="abs" style="left:213px;top:737px;width:20px;height:20px;background:#fff;border:1px solid #262626"></div>
<svg class="abs" style="left:213px;top:737px" width="20" height="20" viewBox="0 0 20 20"><path d="M3.2 10.2L7.8 14.6L16.8 5.6" fill="none" stroke="#222" stroke-width="1.6"/></svg>
<svg class="abs" style="left:157px;top:768px" width="16" height="16" viewBox="0 0 16 16"><path d="M1.5 4.5L8 10.5L14.5 4.5" fill="none" stroke="#404040" stroke-width="2.4"/></svg>
<div class="abs" style="left:183px;top:766px;width:20px;height:20px;background:#fff;border:1px solid #262626"></div>
<svg class="abs" style="left:183px;top:766px" width="20" height="20" viewBox="0 0 20 20"><path d="M3.2 10.2L7.8 14.6L16.8 5.6" fill="none" stroke="#222" stroke-width="1.6"/></svg>
<div class="abs" style="left:213px;top:795px;width:20px;height:20px;background:#fff;border:1px solid #262626"></div>
<svg class="abs" style="left:213px;top:795px" width="20" height="20" viewBox="0 0 20 20"><path d="M3.2 10.2L7.8 14.6L16.8 5.6" fill="none" stroke="#222" stroke-width="1.6"/></svg>
<svg class="abs" style="left:97px;top:826px" width="16" height="16" viewBox="0 0 16 16"><path d="M1.5 4.5L8 10.5L14.5 4.5" fill="none" stroke="#404040" stroke-width="2.4"/></svg>
<div class="abs" style="left:123px;top:824px;width:20px;height:20px;background:#fff;border:1px solid #262626"></div>
<svg class="abs" style="left:123px;top:824px" width="20" height="20" viewBox="0 0 20 20"><path d="M3.2 10.2L7.8 14.6L16.8 5.6" fill="none" stroke="#222" stroke-width="1.6"/></svg>
<svg class="abs" style="left:127px;top:855px" width="16" height="16" viewBox="0 0 16 16"><path d="M1.5 4.5L8 10.5L14.5 4.5" fill="none" stroke="#404040" stroke-width="2.4"/></svg>
<div class="abs" style="left:153px;top:853px;width:20px;height:20px;background:#fff;border:1px solid #262626"></div>
<svg class="abs" style="left:153px;top:853px" width="20" height="20" viewBox="0 0 20 20"><path d="M3.2 10.2L7.8 14.6L16.8 5.6" fill="none" stroke="#222" stroke-width="1.6"/></svg>
<div class="abs" style="left:183px;top:882px;width:20px;height:20px;background:#fff;border:1px solid #262626"></div>
<svg class="abs" style="left:183px;top:882px" width="20" height="20" viewBox="0 0 20 20"><path d="M3.2 10.2L7.8 14.6L16.8 5.6" fill="none" stroke="#222" stroke-width="1.6"/></svg>
<svg class="abs" style="left:97px;top:913px" width="16" height="16" viewBox="0 0 16 16"><path d="M1.5 4.5L8 10.5L14.5 4.5" fill="none" stroke="#404040" stroke-width="2.4"/></svg>
<div class="abs" style="left:123px;top:911px;width:20px;height:20px;background:#fff;border:1px solid #262626"></div>
<svg class="abs" style="left:123px;top:911px" width="20" height="20" viewBox="0 0 20 20"><path d="M3.2 10.2L7.8 14.6L16.8 5.6" fill="none" stroke="#222" stroke-width="1.6"/></svg>
<div class="abs" style="left:153px;top:940px;width:20px;height:20px;background:#fff;border:1px solid #262626"></div>
<svg class="abs" style="left:153px;top:940px" width="20" height="20" viewBox="0 0 20 20"><path d="M3.2 10.2L7.8 14.6L16.8 5.6" fill="none" stroke="#222" stroke-width="1.6"/></svg>
<svg class="abs" style="left:7px;top:970px" width="16" height="18" viewBox="0 0 16 18"><path d="M4.5 2.5L11 9L4.5 15.5" fill="none" stroke="#a6a6a6" stroke-width="2.6"/></svg>
<div class="abs" style="left:33px;top:969px;width:20px;height:20px;background:#fff;border:1px solid #262626"></div>
<svg class="abs" style="left:7px;top:999px" width="16" height="18" viewBox="0 0 16 18"><path d="M4.5 2.5L11 9L4.5 15.5" fill="none" stroke="#a6a6a6" stroke-width="2.6"/></svg>
<div class="abs" style="left:33px;top:998px;width:20px;height:20px;background:#fff;border:1px solid #262626"></div>
<svg class="abs" style="left:7px;top:1028px" width="16" height="18" viewBox="0 0 16 18"><path d="M4.5 2.5L11 9L4.5 15.5" fill="none" stroke="#a6a6a6" stroke-width="2.6"/></svg>
<div class="abs" style="left:33px;top:1027px;width:20px;height:20px;background:#fff;border:1px solid #262626"></div>
<svg class="abs" style="left:7px;top:1057px" width="16" height="18" viewBox="0 0 16 18"><path d="M4.5 2.5L11 9L4.5 15.5" fill="none" stroke="#a6a6a6" stroke-width="2.6"/></svg>
<div class="abs" style="left:33px;top:1056px;width:20px;height:20px;background:#fff;border:1px solid #262626"></div>
<svg class="abs" style="left:7px;top:1086px" width="16" height="18" viewBox="0 0 16 18"><path d="M4.5 2.5L11 9L4.5 15.5" fill="none" stroke="#a6a6a6" stroke-width="2.6"/></svg>
<div class="abs" style="left:33px;top:1085px;width:20px;height:20px;background:#fff;border:1px solid #262626"></div>
<svg class="abs" style="left:7px;top:1115px" width="16" height="18" viewBox="0 0 16 18"><path d="M4.5 2.5L11 9L4.5 15.5" fill="none" stroke="#a6a6a6" stroke-width="2.6"/></svg>
<div class="abs" style="left:33px;top:1114px;width:20px;height:20px;background:#fff;border:1px solid #262626"></div>
<svg class="abs" style="left:7px;top:1144px" width="16" height="18" viewBox="0 0 16 18"><path d="M4.5 2.5L11 9L4.5 15.5" fill="none" stroke="#a6a6a6" stroke-width="2.6"/></svg>
<div class="abs" style="left:33px;top:1143px;width:20px;height:20px;background:#fff;border:1px solid #262626"></div>
<svg class="abs" style="left:7px;top:1173px" width="16" height="18" viewBox="0 0 16 18"><path d="M4.5 2.5L11 9L4.5 15.5" fill="none" stroke="#a6a6a6" stroke-width="2.6"/></svg>
<div class="abs" style="left:33px;top:1172px;width:20px;height:20px;background:#fff;border:1px solid #262626"></div>
<svg class="abs" style="left:7px;top:1202px" width="16" height="18" viewBox="0 0 16 18"><path d="M4.5 2.5L11 9L4.5 15.5" fill="none" stroke="#a6a6a6" stroke-width="2.6"/></svg>
<div class="abs" style="left:33px;top:1201px;width:20px;height:20px;background:#fff;border:1px solid #262626"></div>
<svg class="abs" style="left:7px;top:1231px" width="16" height="18" viewBox="0 0 16 18"><path d="M4.5 2.5L11 9L4.5 15.5" fill="none" stroke="#a6a6a6" stroke-width="2.6"/></svg>
<div class="abs" style="left:33px;top:1230px;width:20px;height:20px;background:#fff;border:1px solid #262626"></div>
<div class="abs" style="left:58.7px;top:42.3px;font-family:'Liberation Sans';font-size:18px;font-weight:bold;color:#000;letter-spacing:-0.378px;line-height:23px;white-space:pre;">act as TCP client</div>
<div class="abs" style="left:58.7px;top:71.3px;font-family:'Liberation Sans';font-size:18px;font-weight:bold;color:#000;letter-spacing:-0.022px;line-height:23px;white-space:pre;">check for OutputDebugString error</div>
<div class="abs" style="left:58.7px;top:100.3px;font-family:'Liberation Sans';font-size:18px;font-weight:bold;color:#000;letter-spacing:-0.391px;line-height:23px;white-space:pre;">connect TCP socket</div>
<div class="abs" style="left:58.7px;top:129.3px;font-family:'Liberation Sans';font-size:18px;font-weight:bold;color:#000;letter-spacing:-0.052px;line-height:23px;white-space:pre;">connect to HTTP server (3 matches)</div>
<div class="abs" style="left:58.7px;top:158.3px;font-family:'Liberation Sans';font-size:18px;font-weight:bold;color:#000;letter-spacing:-0.034px;line-height:23px;white-space:pre;">create a process with modified I/O handles and window</div>
<div class="abs" style="left:58.7px;top:187.3px;font-family:'Liberation Sans';font-size:18px;font-weight:bold;color:#000;letter-spacing:-0.083px;line-height:23px;white-space:pre;">create HTTP request (3 matches)</div>
<div class="abs" style="left:58.7px;top:216.3px;font-family:'Liberation Sans';font-size:18px;font-weight:bold;color:#000;letter-spacing:-0.122px;line-height:23px;white-space:pre;">create pipe</div>
<div class="abs" style="left:58.7px;top:245.3px;font-family:'Liberation Sans';font-size:18px;font-weight:bold;color:#000;letter-spacing:-0.450px;line-height:23px;white-space:pre;">create process</div>
<div class="abs" style="left:58.7px;top:274.3px;font-family:'Liberation Sans';font-size:18px;font-weight:bold;color:#000;letter-spacing:-0.069px;line-height:23px;white-space:pre;">create registry key</div>
<div class="abs" style="left:58.7px;top:303.3px;font-family:'Liberation Sans';font-size:18px;font-weight:bold;color:#000;letter-spacing:-0.222px;line-height:23px;white-space:pre;">create service</div>
<div class="abs" style="left:58.7px;top:332.3px;font-family:'Liberation Sans';font-size:18px;font-weight:bold;color:#000;letter-spacing:-0.380px;line-height:23px;white-space:pre;">create TCP socket</div>
<div class="abs" style="left:58.7px;top:361.3px;font-family:'Liberation Sans';font-size:18px;font-weight:bold;color:#000;letter-spacing:-0.059px;line-height:23px;white-space:pre;">create thread</div>
<div class="abs" style="left:58.7px;top:390.3px;font-family:'Liberation Sans';font-size:18px;font-weight:bold;color:#000;letter-spacing:-0.186px;line-height:23px;white-space:pre;">create UDP socket</div>
<div class="abs" style="left:58.7px;top:419.3px;font-family:'Liberation Sans';font-size:18px;font-weight:bold;color:#000;letter-spacing:-0.150px;line-height:23px;white-space:pre;">delete service</div>
<div class="abs" style="left:58.7px;top:448.3px;font-family:'Liberation Sans';font-size:18px;font-weight:bold;color:#000;letter-spacing:-0.169px;line-height:23px;white-space:pre;">encode data using XOR (6 matches)</div>
<div class="abs" style="left:58.7px;top:477.3px;font-family:'Liberation Sans';font-size:18px;font-weight:bold;color:#000;letter-spacing:-0.044px;line-height:23px;white-space:pre;">execute shell command and capture output</div>
<div class="abs" style="left:88.7px;top:506.3px;font-family:'Liberation Sans';font-size:18px;font-weight:bold;color:#000;letter-spacing:-0.207px;line-height:23px;white-space:pre;">function(sub_10003A13)</div>
<div class="abs" style="left:718.6px;top:504.5px;font-family:'Liberation Mono';font-size:18px;font-weight:bold;color:#5283ac;letter-spacing:0.022px;line-height:23px;white-space:pre;">10003A13</div>
<div class="abs" style="left:118.7px;top:535.3px;font-family:'Liberation Sans';font-size:18px;font-weight:normal;color:#000;letter-spacing:-0.549px;line-height:23px;white-space:pre;">and</div>
<div class="abs" style="left:148.7px;top:564.3px;font-family:'Liberation Sans';font-size:18px;font-weight:bold;color:#000;letter-spacing:-0.015px;line-height:23px;white-space:pre;">match(create a process with modified I/O handles and window)</div>
<div class="abs" style="left:178.7px;top:593.3px;font-family:'Liberation Sans';font-size:18px;font-weight:normal;color:#000;letter-spacing:-0.549px;line-height:23px;white-space:pre;">and</div>
<div class="abs" style="left:208.7px;top:622.3px;font-family:'Liberation Sans';font-size:18px;font-weight:bold;color:#4e7d3c;letter-spacing:-0.545px;line-height:23px;white-space:pre;">number(0x101 = STARTF_USESTDHANDLES | STARTF_US…</div>
<div class="abs" style="left:718.6px;top:620.5px;font-family:'Liberation Mono';font-size:18px;font-weight:bold;color:#5283ac;letter-spacing:0.022px;line-height:23px;white-space:pre;">10003B03</div>
<div class="abs" style="left:827.2px;top:620.5px;font-family:'Liberation Mono';font-size:18px;font-weight:normal;color:#333;letter-spacing:0.000px;line-height:23px;white-space:pre;">mov</div>
<div class="abs" style="left:914.5px;top:620.5px;font-family:'Liberation Mono';font-size:18px;font-weight:normal;color:#333;letter-spacing:0.000px;line-height:23px;white-space:pre;">[ebp+StartupInfo.dwFlags…</div>
<div class="abs" style="left:208.7px;top:651.3px;font-family:'Liberation Sans';font-size:18px;font-weight:normal;color:#000;letter-spacing:0.192px;line-height:23px;white-space:pre;">optional</div>
<div class="abs" style="left:238.7px;top:680.3px;font-family:'Liberation Sans';font-size:18px;font-weight:bold;color:#4e7d3c;letter-spacing:0.095px;line-height:23px;white-space:pre;">api(kernel32.GetStartupInfo)</div>
<div class="abs" style="left:718.6px;top:678.5px;font-family:'Liberation Mono';font-size:18px;font-weight:bold;color:#5283ac;letter-spacing:0.022px;line-height:23px;white-space:pre;">10003AE4</div>
<div class="abs" style="left:827.2px;top:678.5px;font-family:'Liberation Mono';font-size:18px;font-weight:normal;color:#333;letter-spacing:0.000px;line-height:23px;white-space:pre;">call</div>
<div class="abs" style="left:914.5px;top:678.5px;font-family:'Liberation Mono';font-size:18px;font-weight:normal;color:#333;letter-spacing:0.000px;line-height:23px;white-space:pre;">ds:GetStartupInfoA</div>
<div class="abs" style="left:208.7px;top:709.3px;font-family:'Liberation Sans';font-size:18px;font-weight:normal;color:#000;letter-spacing:0.000px;line-height:23px;white-space:pre;">or</div>
<div class="abs" style="left:238.7px;top:738.3px;font-family:'Liberation Sans';font-size:18px;font-weight:bold;color:#4e7d3c;letter-spacing:-0.257px;line-height:23px;white-space:pre;">api(kernel32.CreateProcess)</div>
<div class="abs" style="left:718.6px;top:736.5px;font-family:'Liberation Mono';font-size:18px;font-weight:bold;color:#5283ac;letter-spacing:0.022px;line-height:23px;white-space:pre;">10003D6D</div>
<div class="abs" style="left:827.2px;top:736.5px;font-family:'Liberation Mono';font-size:18px;font-weight:normal;color:#333;letter-spacing:0.000px;line-height:23px;white-space:pre;">call</div>
<div class="abs" style="left:914.5px;top:736.5px;font-family:'Liberation Mono';font-size:18px;font-weight:normal;color:#333;letter-spacing:0.000px;line-height:23px;white-space:pre;">ds:CreateProcessA</div>
<div class="abs" style="left:208.7px;top:767.3px;font-family:'Liberation Sans';font-size:18px;font-weight:normal;color:#000;letter-spacing:0.000px;line-height:23px;white-space:pre;">or</div>
<div class="abs" style="left:238.7px;top:796.3px;font-family:'Liberation Sans';font-size:18px;font-weight:bold;color:#4e7d3c;letter-spacing:-0.012px;line-height:23px;white-space:pre;">number(0x44)</div>
<div class="abs" style="left:718.6px;top:794.5px;font-family:'Liberation Mono';font-size:18px;font-weight:bold;color:#5283ac;letter-spacing:0.022px;line-height:23px;white-space:pre;">10003ADC</div>
<div class="abs" style="left:827.2px;top:794.5px;font-family:'Liberation Mono';font-size:18px;font-weight:normal;color:#333;letter-spacing:0.000px;line-height:23px;white-space:pre;">mov</div>
<div class="abs" style="left:914.5px;top:794.5px;font-family:'Liberation Mono';font-size:18px;font-weight:normal;color:#333;letter-spacing:0.000px;line-height:23px;white-space:pre;">[ebp+StartupInfo.cb], 44…</div>
<div class="abs" style="left:148.7px;top:825.3px;font-family:'Liberation Sans';font-size:18px;font-weight:bold;color:#000;letter-spacing:-0.020px;line-height:23px;white-space:pre;">match(create pipe)</div>
<div class="abs" style="left:178.7px;top:854.3px;font-family:'Liberation Sans';font-size:18px;font-weight:normal;color:#000;letter-spacing:0.000px;line-height:23px;white-space:pre;">or</div>
<div class="abs" style="left:208.7px;top:883.3px;font-family:'Liberation Sans';font-size:18px;font-weight:bold;color:#4e7d3c;letter-spacing:-0.083px;line-height:23px;white-space:pre;">api(kernel32.CreatePipe)</div>
<div class="abs" style="left:718.6px;top:881.5px;font-family:'Liberation Mono';font-size:18px;font-weight:bold;color:#5283ac;letter-spacing:0.022px;line-height:23px;white-space:pre;">10003ACB</div>
<div class="abs" style="left:827.2px;top:881.5px;font-family:'Liberation Mono';font-size:18px;font-weight:normal;color:#333;letter-spacing:0.000px;line-height:23px;white-space:pre;">call</div>
<div class="abs" style="left:914.5px;top:881.5px;font-family:'Liberation Mono';font-size:18px;font-weight:normal;color:#333;letter-spacing:0.000px;line-height:23px;white-space:pre;">ds:CreatePipe</div>
<div class="abs" style="left:148.7px;top:912.3px;font-family:'Liberation Sans';font-size:18px;font-weight:normal;color:#000;letter-spacing:0.000px;line-height:23px;white-space:pre;">or</div>
<div class="abs" style="left:178.7px;top:941.3px;font-family:'Liberation Sans';font-size:18px;font-weight:bold;color:#4e7d3c;letter-spacing:-0.013px;line-height:23px;white-space:pre;">string(cmd.exe /c )</div>
<div class="abs" style="left:718.6px;top:939.5px;font-family:'Liberation Mono';font-size:18px;font-weight:bold;color:#5283ac;letter-spacing:0.022px;line-height:23px;white-space:pre;">10003AED</div>
<div class="abs" style="left:58.7px;top:970.3px;font-family:'Liberation Sans';font-size:18px;font-weight:bold;color:#000;letter-spacing:-0.014px;line-height:23px;white-space:pre;">get common file path (3 matches)</div>
<div class="abs" style="left:58.7px;top:999.3px;font-family:'Liberation Sans';font-size:18px;font-weight:bold;color:#000;letter-spacing:-0.136px;line-height:23px;white-space:pre;">get hostname</div>
<div class="abs" style="left:58.7px;top:1028.3px;font-family:'Liberation Sans';font-size:18px;font-weight:bold;color:#000;letter-spacing:-0.189px;line-height:23px;white-space:pre;">get socket status (2 matches)</div>
<div class="abs" style="left:58.7px;top:1057.3px;font-family:'Liberation Sans';font-size:18px;font-weight:bold;color:#000;letter-spacing:-0.046px;line-height:23px;white-space:pre;">initialize Winsock library (2 matches)</div>
<div class="abs" style="left:58.7px;top:1086.3px;font-family:'Liberation Sans';font-size:18px;font-weight:bold;color:#000;letter-spacing:0.083px;line-height:23px;white-space:pre;">link function at runtime</div>
<div class="abs" style="left:58.7px;top:1115.3px;font-family:'Liberation Sans';font-size:18px;font-weight:bold;color:#000;letter-spacing:-0.080px;line-height:23px;white-space:pre;">open registry key</div>
<div class="abs" style="left:58.7px;top:1144.3px;font-family:'Liberation Sans';font-size:18px;font-weight:bold;color:#000;letter-spacing:-0.246px;line-height:23px;white-space:pre;">persist via Windows service</div>
<div class="abs" style="left:58.7px;top:1173.3px;font-family:'Liberation Sans';font-size:18px;font-weight:bold;color:#000;letter-spacing:-0.237px;line-height:23px;white-space:pre;">print debug messages (2 matches)</div>
<div class="abs" style="left:58.7px;top:1202.3px;font-family:'Liberation Sans';font-size:18px;font-weight:bold;color:#000;letter-spacing:0.071px;line-height:23px;white-space:pre;">query registry entry</div>
<div class="abs" style="left:58.7px;top:1231.3px;font-family:'Liberation Sans';font-size:18px;font-weight:bold;color:#000;letter-spacing:-0.080px;line-height:23px;white-space:pre;">query registry value</div>
</div></body></html>
